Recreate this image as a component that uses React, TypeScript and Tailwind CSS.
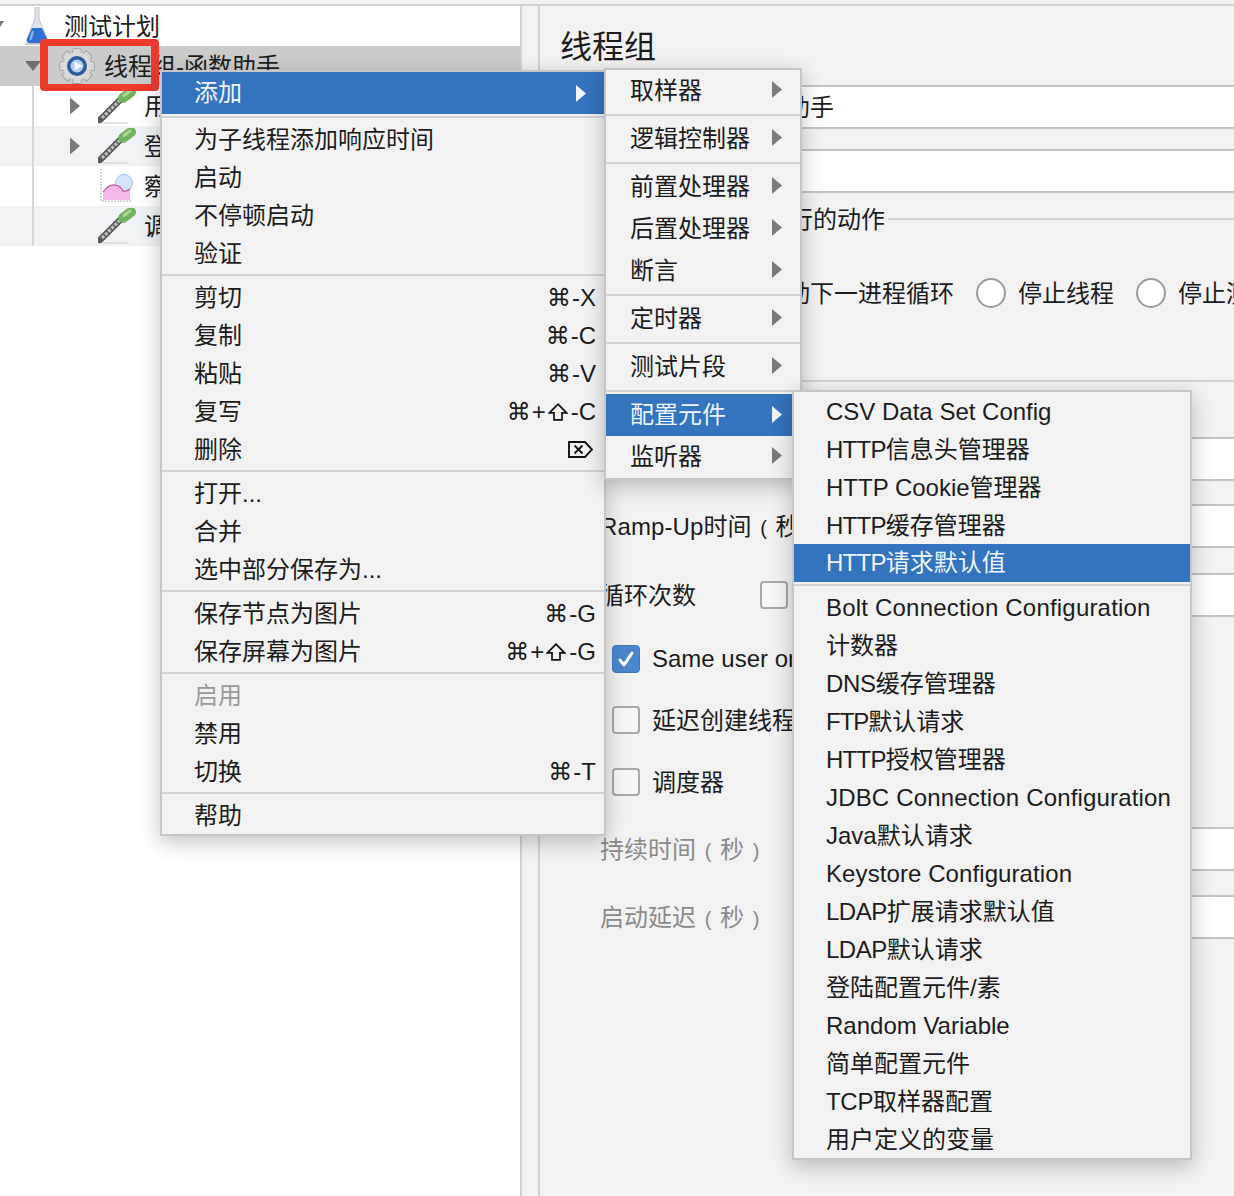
import React from "react";

const FONT = "font-['Liberation_Sans','Noto_Sans_CJK_SC','DejaVu_Sans',sans-serif]";

type Item = { t: string; k?: string; del?: boolean; dim?: boolean; sel?: boolean; arrow?: boolean; h?: number; ls?: string } | "sep";

const mainItems: Item[] = [
  { t: "添加", sel: true, arrow: true, h: 42 },
  "sep",
  { t: "为子线程添加响应时间" },
  { t: "启动" },
  { t: "不停顿启动" },
  { t: "验证" },
  "sep",
  { t: "剪切", k: "⌘-X" },
  { t: "复制", k: "⌘-C" },
  { t: "粘贴", k: "⌘-V" },
  { t: "复写", k: "⌘+⇧-C" },
  { t: "删除", del: true },
  "sep",
  { t: "打开..." },
  { t: "合并" },
  { t: "选中部分保存为..." },
  "sep",
  { t: "保存节点为图片", k: "⌘-G" },
  { t: "保存屏幕为图片", k: "⌘+⇧-G" },
  "sep",
  { t: "启用", dim: true },
  { t: "禁用" },
  { t: "切换", k: "⌘-T" },
  "sep",
  { t: "帮助" },
];

const subItems: Item[] = [
  { t: "取样器", arrow: true },
  "sep",
  { t: "逻辑控制器", arrow: true },
  "sep",
  { t: "前置处理器", arrow: true },
  { t: "后置处理器", arrow: true },
  { t: "断言", arrow: true },
  "sep",
  { t: "定时器", arrow: true },
  "sep",
  { t: "测试片段", arrow: true },
  "sep",
  { t: "配置元件", arrow: true, sel: true },
  { t: "监听器", arrow: true },
];

const configItems: Item[] = [
  { t: "CSV Data Set Config" },
  { t: "HTTP信息头管理器" },
  { t: "HTTP Cookie管理器" },
  { t: "HTTP缓存管理器" },
  { t: "HTTP请求默认值", sel: true },
  "sep",
  { t: "Bolt Connection Configuration", ls: "tracking-[0.2px]" },
  { t: "计数器" },
  { t: "DNS缓存管理器" },
  { t: "FTP默认请求" },
  { t: "HTTP授权管理器" },
  { t: "JDBC Connection Configuration", ls: "tracking-[0.17px]" },
  { t: "Java默认请求" },
  { t: "Keystore Configuration", ls: "tracking-[0.09px]" },
  { t: "LDAP扩展请求默认值" },
  { t: "LDAP默认请求" },
  { t: "登陆配置元件/素" },
  { t: "Random Variable" },
  { t: "简单配置元件" },
  { t: "TCP取样器配置" },
  { t: "用户定义的变量" },
];

const prefixTrack: Record<string, string> = {
  HTTP: "tracking-[-0.75px]",
  LDAP: "tracking-[-0.5px]",
  FTP: "tracking-[-1px]",
  DNS: "tracking-[-0.3px]",
  TCP: "tracking-[-0.3px]",
};

function Label({ t, ls = "", nudge }: { t: string; ls?: string; nudge: boolean }) {
  const pt = nudge ? "pt-[2px]" : "";
  const m = t.match(/^([A-Z]+)([^ a-z].*)$/);
  if (m && prefixTrack[m[1]]) {
    return (
      <span className={pt}>
        <span className={prefixTrack[m[1]]}>{m[1]}</span>
        {m[2]}
      </span>
    );
  }
  return <span className={`${pt} ${ls}`}>{t}</span>;
}

function ShiftIcon() {
  return (
    <svg viewBox="0 0 20 18" className="w-5 h-[18px] ml-[2px] mr-[3px]" fill="none" stroke="#111" strokeWidth="1.7" strokeLinejoin="miter">
      <path d="M10 1.2L18.5 9.8H14V16.8H6V9.8H1.5Z" />
    </svg>
  );
}

function Keys({ k }: { k: string }) {
  return (
    <span className="pt-[2px] text-[24px] flex items-center">
      {k.split("").map((c, i) =>
        c === "⌘" ? (
          <span key={i} className="font-['DejaVu_Sans',sans-serif] mr-[1px]">{c}</span>
        ) : c === "⇧" ? (
          <ShiftIcon key={i} />
        ) : (
          <span key={i}>{c}</span>
        )
      )}
    </span>
  );
}

function Arrow({ light, className = "" }: { light?: boolean; className?: string }) {
  return (
    <svg viewBox="0 0 10 17" className={`w-[10px] h-[17px] ${className}`}>
      <polygon points="0,0 10,8.5 0,17" fill={light ? "#f2f6fb" : "#7a7a7a"} />
    </svg>
  );
}

function DeleteIcon() {
  return (
    <svg viewBox="0 0 25 17" className="w-[25px] h-[17px] mr-[3px]" fill="none" stroke="#111" strokeWidth="1.9">
      <path d="M1 1H17L24 8.5L17 16H1Z" />
      <path d="M6.5 4.5L14.5 12.5M14.5 4.5L6.5 12.5" />
    </svg>
  );
}

function Menu({ items, itemH, pad, right, lift, plain, className }: { items: Item[]; itemH: string; pad: string; right: string; lift?: boolean; plain?: boolean; className: string }) {
  return (
    <div className={`absolute bg-[#f2f2f2] border-2 border-[#c6c6c6] shadow-[0_6px_20px_rgba(0,0,0,0.24)] flex flex-col ${className}`}>
      {items.map((it, i) =>
        it === "sep" ? (
          <div key={i} className="h-[6px] flex items-center">
            <div className="h-[2px] w-full bg-[#d2d2d2]" />
          </div>
        ) : (
          <div
            key={i}
            className={`flex items-center justify-between ${it.h === 42 ? "h-[42px] pr-[18px]" : `${itemH} ${right}`} ${pad} text-[24px] whitespace-nowrap ${
              it.sel ? "bg-[#3473bd] text-[#eef4fb]" : it.dim ? "text-[#9a9a9a]" : "text-[#1c1c1c]"
            }`}
          >
            <Label t={it.t} ls={it.ls} nudge={!it.sel && !plain} />
            {it.arrow && <Arrow light={it.sel} className={lift ? (it.sel ? "mb-[2px]" : "mb-[4px]") : ""} />}
            {it.k && <Keys k={it.k} />}
            {it.del && <DeleteIcon />}
          </div>
        )
      )}
    </div>
  );
}

function Flask() {
  return (
    <svg viewBox="0 0 24 38" className="w-[24px] h-[38px]">
      <path d="M10 0H14V12L22 31Q23.5 36 19 36H5Q0.5 36 2 31L10 12Z" fill="#dde3ea" stroke="#b4bbc5" strokeWidth="0.8" />
      <path d="M7 21H17L22 32Q23 36 19 36H5Q1 36 2 32Z" fill="#2f6fd0" />
      <path d="M8 24L5.5 33" stroke="#86b3ec" strokeWidth="2.2" />
      <path d="M0 37H24" stroke="#7f8590" strokeWidth="1.2" opacity="0.7" />
    </svg>
  );
}

function Gear() {
  return (
    <svg viewBox="0 0 38 36" className="w-[38px] h-[36px]">
      {[0, 45, 90, 135, 180, 225, 270, 315].map((a) => (
        <rect key={a} x="14.5" y="0.5" width="9" height="8" rx="2" fill="#d6d6d6" stroke="#a4a4a4" strokeWidth="1" transform={`rotate(${a} 19 18)`} />
      ))}
      <circle cx="19" cy="18" r="14" fill="#dadada" />
      <circle cx="19" cy="18" r="10" fill="#2d5a98" />
      <circle cx="19" cy="18" r="6.5" fill="#b3cdea" />
      <polygon points="16.5,13.5 24.5,18 16.5,22.5" fill="#f4f8fc" />
    </svg>
  );
}

function Dropper() {
  return (
    <svg viewBox="0 0 38 36" className="w-[38px] h-[36px]">
      <path d="M5 35H30" stroke="#d4d4d4" strokeWidth="1.5" />
      <path d="M2 32L22 12" stroke="#5a5a5a" strokeWidth="6.5" strokeLinecap="round" />
      <path d="M4 30L22 12" stroke="#c4c4c4" strokeWidth="3" strokeDasharray="3 1.5" />
      <path d="M25 10L33 4" stroke="#74b160" strokeWidth="10" strokeLinecap="round" />
      <path d="M26 7.5L32 3" stroke="#a9d896" strokeWidth="3" strokeLinecap="round" />
    </svg>
  );
}

function Graph() {
  return (
    <svg viewBox="0 0 34 36" className="w-[34px] h-[36px]">
      <path d="M2 1V33H33" fill="none" stroke="#cccccc" strokeWidth="1.6" strokeDasharray="2 1" />
      <circle cx="25" cy="15" r="8.5" fill="#d6e5fb" stroke="#a5c2ec" strokeWidth="1" />
      <path d="M4 32V24Q10 16 16 17T24 23Q27 24 31 21V32Z" fill="#f3b9e8" />
      <path d="M4 24Q10 16 16 17T24 23Q27 24 31 21" fill="none" stroke="#c2568f" strokeWidth="1.2" />
    </svg>
  );
}

function TreeRow({ bg, pl, children }: { bg: string; pl: string; children: React.ReactNode }) {
  return <div className={`h-10 flex items-center whitespace-nowrap text-[24px] text-[#1c1c1c] ${bg} ${pl}`}>{children}</div>;
}

function ChildTri({ show }: { show?: boolean }) {
  return <div className="w-[28px] shrink-0">{show && <Arrow className="w-[10px] h-[18px]" />}</div>;
}

function Input({ text, className = "" }: { text?: string; className?: string }) {
  return (
    <div className={`h-[44px] flex-1 bg-white border-y-2 border-[#c4c4c4] flex items-center pl-[18px] text-[24px] text-[#1c1c1c] whitespace-nowrap ${className}`}>
      <span className="pt-[2px]">{text}</span>
    </div>
  );
}

function Check({ on }: { on?: boolean }) {
  return on ? (
    <div className="w-7 h-7 rounded-[4px] bg-[#4a86cd] border border-[#3f78bf] flex items-center justify-center shrink-0">
      <svg viewBox="0 0 20 20" className="w-5 h-5" fill="none" stroke="#fff" strokeWidth="3" strokeLinecap="round" strokeLinejoin="round">
        <path d="M4 11L8 16L16 4" />
      </svg>
    </div>
  ) : (
    <div className="w-7 h-7 rounded-[4px] bg-[#f6f6f6] border-2 border-[#a8a8a8] shrink-0" />
  );
}

function Radio() {
  return <div className="w-[30px] h-[30px] rounded-full bg-white border-2 border-[#9c9c9c] shrink-0" />;
}

function Secs({ label }: { label: string }) {
  return (
    <span className="w-[200px] shrink-0 pt-[2px] flex items-baseline">
      {label}
      <span className="w-6 text-center text-[20px]">(</span>
      秒
      <span className="w-6 text-center text-[20px]">)</span>
    </span>
  );
}

export default function App() {
  return (
    <div className={`relative w-[1234px] h-[1196px] overflow-hidden bg-[#f2f2f2] ${FONT}`}>
      <div className="h-[6px] border-b-2 border-[#d2d2d2]" />
      <div className="flex h-[1190px]">
        {/* tree */}
        <div className="relative w-[522px] shrink-0 bg-white border-r-2 border-[#d2d2d2]">
          <svg viewBox="0 0 4 6" className="absolute left-0 top-[15px] w-[4px] h-[6px]">
            <polygon points="0,0 4,0 0,6" fill="#777" />
          </svg>
          <TreeRow bg="bg-white" pl="pl-[25px]">
            <Flask />
            <span className="ml-[15px] pt-[2px]">测试计划</span>
          </TreeRow>
          <TreeRow bg="bg-[#cbcbcb]" pl="pl-[25px]">
            <svg viewBox="0 0 16 10" className="w-4 h-[10px] shrink-0">
              <polygon points="0,0 16,0 8,10" fill="#6f6f6f" />
            </svg>
            <span className="ml-[17px]"><Gear /></span>
            <span className="ml-[8px] pt-[2px]">线程组-函数助手</span>
          </TreeRow>
          <TreeRow bg="bg-white" pl="pl-[70px]">
            <ChildTri show />
            <Dropper />
            <span className="ml-2 pt-[2px]">用户定义的变量</span>
          </TreeRow>
          <TreeRow bg="bg-[#eff3f8]" pl="pl-[70px]">
            <ChildTri show />
            <Dropper />
            <span className="ml-2 pt-[2px]">登录请求</span>
          </TreeRow>
          <TreeRow bg="bg-white" pl="pl-[70px]">
            <ChildTri />
            <span className="ml-[1px]"><Graph /></span>
            <span className="ml-[11px] pt-[2px]">察看结果树</span>
          </TreeRow>
          <TreeRow bg="bg-[#eff3f8]" pl="pl-[70px]">
            <ChildTri />
            <Dropper />
            <span className="ml-2 pt-[2px]">调试取样器</span>
          </TreeRow>
          <div className="absolute left-[32px] top-[80px] w-[2px] h-[160px] bg-[#d6d6d6]" />
        </div>
        {/* divider gutter */}
        <div className="w-[16px] shrink-0" />
        {/* form */}
        <div className="flex-1 min-w-0 border-l-2 border-[#d2d2d2] overflow-hidden text-[#1c1c1c] text-[24px]">
          <div className="h-[79px] flex items-center pl-[20px] text-[32px] pt-[3px]">线程组</div>
          <div className="flex items-center pl-[23px]">
            <span className="w-[77px]">名称：</span>
            <Input text="线程组-函数助手" />
          </div>
          <div className="flex items-center pl-[23px] mt-[20px]">
            <span className="w-[77px]">注释：</span>
            <Input />
          </div>
          <div className="h-[48px] mt-[2px] flex items-center pl-[33px] gap-[3px] whitespace-nowrap">
            <span className="pt-[2px]">在取样器错误后要执行的动作</span>
            <div className="flex-1 h-[2px] bg-[#d2d2d2]" />
          </div>
          <div className="mt-[28px] h-[44px] flex items-center pl-[222px] whitespace-nowrap">
            <span className="pt-[2px]">启动下一进程循环</span>
            <span className="ml-[22px]"><Radio /></span>
            <span className="ml-[12px] pt-[2px]">停止线程</span>
            <span className="ml-[22px]"><Radio /></span>
            <span className="ml-[12px] pt-[2px]">停止测试</span>
          </div>
          <div className="mt-[65px] h-[2px] bg-[#d2d2d2]" />
          <div className="mt-[55px] flex items-center pl-[60px]">
            <span className="w-[200px]">线程数</span>
            <Input />
          </div>
          <div className="mt-[23px] flex items-center pl-[60px] whitespace-nowrap">
            <span className="w-[200px] shrink-0 pt-[2px] tracking-[0.1px] flex items-baseline">
              Ramp-Up时间
              <span className="w-6 text-center text-[20px]">(</span>
              秒
            </span>
            <Input />
          </div>
          <div className="mt-[25px] flex items-center pl-[60px] whitespace-nowrap">
            <span className="w-[160px] shrink-0 pt-[2px]">循环次数</span>
            <Check />
            <span className="ml-[12px] w-[28px]" />
            <Input />
          </div>
          <div className="mt-[28px] h-[28px] flex items-center pl-[72px] whitespace-nowrap">
            <Check on />
            <span className="ml-[12px]">Same user on each iteration</span>
          </div>
          <div className="mt-[33px] h-[28px] flex items-center pl-[72px] whitespace-nowrap">
            <Check />
            <span className="ml-[12px] pt-[2px]">延迟创建线程直到需要</span>
          </div>
          <div className="mt-[34px] h-[28px] flex items-center pl-[72px] whitespace-nowrap">
            <Check />
            <span className="ml-[12px] pt-[2px]">调度器</span>
          </div>
          <div className="mt-[31px] flex items-center pl-[60px] whitespace-nowrap text-[#8a8a8a]">
            <Secs label="持续时间" />
            <Input />
          </div>
          <div className="mt-[24px] flex items-center pl-[60px] whitespace-nowrap text-[#8a8a8a]">
            <Secs label="启动延迟" />
            <Input />
          </div>
        </div>
      </div>

      {/* red annotation */}
      <div className="absolute left-[40px] top-[39px] w-[119px] h-[52px] border-[7px] border-x-[8px] border-[#ee3a2c] rounded-[4px]" />

      {/* context menus */}
      <Menu items={mainItems} itemH="h-[38px]" pad="pl-[32px]" right="pr-[8px]" className="left-[160px] top-[70px] w-[446px] z-10" />
      <Menu items={subItems} itemH="h-[42px]" pad="pl-[24px]" right="pr-[18px]" lift plain className="left-[604px] top-[68px] w-[198px] z-20" />
      <Menu items={configItems} itemH="h-[38px]" pad="pl-[32px]" right="pr-[8px]" className="left-[792px] top-[390px] w-[400px] z-30" />
    </div>
  );
}
